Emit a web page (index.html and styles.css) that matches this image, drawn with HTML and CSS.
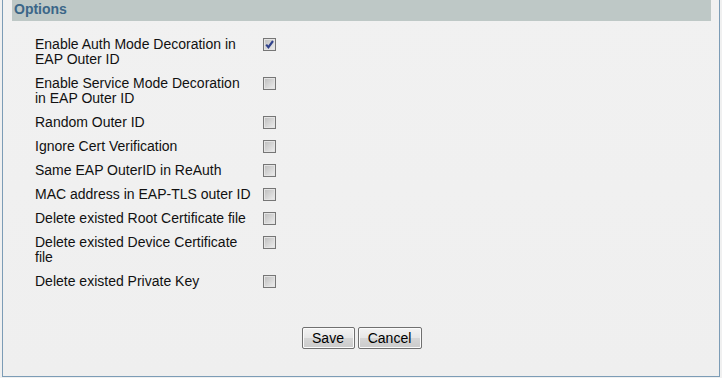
FILE: index.html
```html
<!DOCTYPE html>
<html lang="en">
<head>
    <meta charset="UTF-8">
    <title>Options</title>
    <link rel="stylesheet" href="styles.css">
</head>
<body>

<div class="panel">
    <div class="section-title">Options</div>

    <div class="options">
        <div class="opt-label">Enable Auth Mode Decoration in EAP Outer ID</div>
        <div class="opt-field"><span class="check checked"><svg width="9" height="9" viewBox="0 0 9 9"><path d="M1.2 4.6 L3.4 7.2 L8 1" fill="none" stroke="#30428c" stroke-width="2.1"/></svg></span></div>

        <div class="opt-label">Enable Service Mode Decoration in EAP Outer ID</div>
        <div class="opt-field"><span class="check"></span></div>

        <div class="opt-label">Random Outer ID</div>
        <div class="opt-field"><span class="check"></span></div>

        <div class="opt-label">Ignore Cert Verification</div>
        <div class="opt-field"><span class="check"></span></div>

        <div class="opt-label">Same EAP OuterID in ReAuth</div>
        <div class="opt-field"><span class="check"></span></div>

        <div class="opt-label">MAC address in EAP-TLS outer ID</div>
        <div class="opt-field"><span class="check"></span></div>

        <div class="opt-label">Delete existed Root Certificate file</div>
        <div class="opt-field"><span class="check"></span></div>

        <div class="opt-label">Delete existed Device Certificate file</div>
        <div class="opt-field"><span class="check"></span></div>

        <div class="opt-label">Delete existed Private Key</div>
        <div class="opt-field"><span class="check"></span></div>
    </div>

    <div class="buttons">
        <button type="button" class="btn btn-save">Save</button>
        <button type="button" class="btn btn-cancel">Cancel</button>
    </div>
</div>

</body>
</html>
```

FILE: styles.css
```css
body {
    margin: 0;
    padding: 0;
    background-color: #f0f0f0;
    font-family: "Liberation Sans", Arial, sans-serif;
    font-size: 14px;
    color: #111;
}
.panel {
    margin: 0 2px;
    height: 376px;
    border: 1px solid #7c9cb6;
    border-top: none;
    padding: 0 8px 0 9px;
    background: linear-gradient(to bottom, #f1f1f1, #efefef);
}
.section-title {
    background-color: #bec8c6;
    color: #3b6688;
    font-weight: bold;
    font-size: 14px;
    height: 21px;
    line-height: 18px;
    padding-left: 2px;
}
.options {
    display: grid;
    grid-template-columns: 218px auto;
    margin: 11px 0 0 23px;
}
.opt-label {
    line-height: 15px;
    padding: 4.5px 0;
}
.opt-field {
    padding: 6px 0 0 10px;
}
.check {
    display: block;
    width: 11px;
    height: 11px;
    border: 1px solid #767676;
    background: linear-gradient(135deg, #bcbcbc, #eeeeee);
    box-shadow: inset 0 0 0 1px #e4e4e4;
    position: relative;
}
.check svg {
    position: absolute;
    left: 1px;
    top: 1px;
}
.buttons {
    display: flex;
    justify-content: center;
    gap: 3px;
    margin-top: 34px;
}
.btn {
    font-family: "Liberation Sans", Arial, sans-serif;
    font-size: 14px;
    color: #000;
    height: 22px;
    padding: 0;
    border: 1px solid #707070;
    border-radius: 2px;
    background: linear-gradient(to bottom, #f3f3f3 0%, #e6e6e6 50%, #d6d6d6 51%, #cbcbcb 100%);
    box-shadow: inset 0 0 0 1px #fbfbfb;
    cursor: pointer;
}
.btn-save {
    width: 53px;
}
.btn-cancel {
    width: 64px;
}
```
